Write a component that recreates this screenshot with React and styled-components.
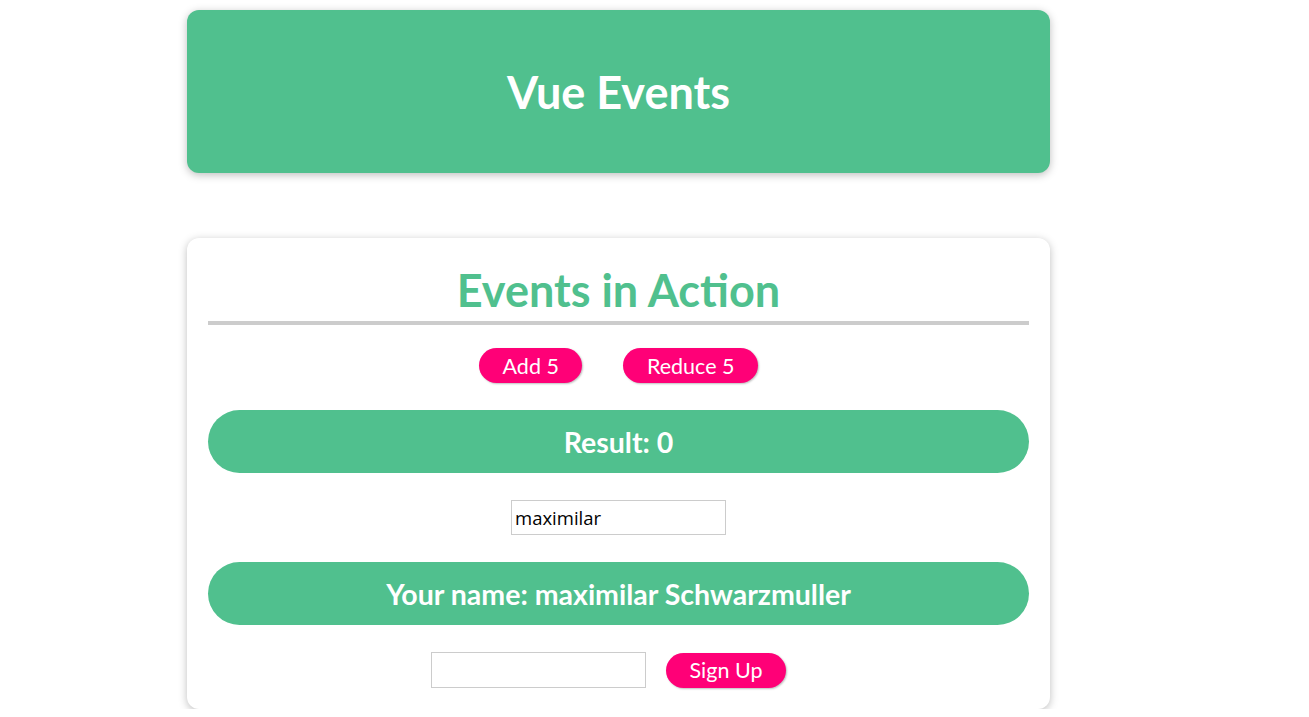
import { useState } from "react";
import styled, { createGlobalStyle } from "styled-components";

const GlobalStyle = createGlobalStyle`
  * {
    box-sizing: border-box;
  }

  html {
    font-family: "Lato", "Noto Sans", sans-serif;
  }

  body {
    margin: 0;
    background: #ffffff;
  }
`;

const green = "#50c08e";
const pink = "#ff0077";

const Page = styled.div`
  padding: 10px 0 0 187px;
`;

const Header = styled.header`
  width: 863px;
  height: 163px;
  display: flex;
  align-items: center;
  justify-content: center;
  background: ${green};
  border-radius: 12px;
  box-shadow: 0 2px 8px rgba(0, 0, 0, 0.26);

  h1 {
    margin: 0;
    color: #ffffff;
    font-size: 45px;
    font-weight: 700;
  }
`;

const Card = styled.section`
  width: 863px;
  margin-top: 65px;
  padding: 26px 21px 21px;
  display: flex;
  flex-direction: column;
  align-items: stretch;
  background: #ffffff;
  border-radius: 12px;
  box-shadow: 0 2px 8px rgba(0, 0, 0, 0.26);
`;

const Title = styled.h2`
  margin: 0;
  height: 53px;
  line-height: 53px;
  text-align: center;
  color: ${green};
  font-size: 45px;
  font-weight: 700;
  border-bottom: 4px solid #cccccc;
  box-sizing: content-box;
  padding-bottom: 4px;
`;

const Row = styled.div`
  display: flex;
  justify-content: center;
  align-items: center;
  margin-top: ${(p) => p.$top || 27}px;
`;

const Button = styled.button`
  height: 35px;
  margin: 0 20.5px;
  padding: 0 23.5px;
  border: none;
  border-radius: 30px;
  background: ${pink};
  color: #ffffff;
  font-family: "Lato", "Noto Sans", sans-serif;
  font-size: 21.5px;
  font-weight: 400;
  box-shadow: 1px 1px 2px rgba(0, 0, 0, 0.26);
  cursor: pointer;
`;

const Bar = styled.div`
  height: 63px;
  margin-top: 27px;
  display: flex;
  align-items: center;
  justify-content: center;
  background: ${green};
  border-radius: 32px;
  color: #ffffff;
  font-size: 28.5px;
  font-weight: 700;
`;

const Field = styled.input`
  width: 215px;
  height: ${(p) => p.$h || 35}px;
  padding: 0 3px;
  border: 1px solid #cccccc;
  font-family: "Open Sans", "Noto Sans", sans-serif;
  font-size: 18.5px;
  color: #000000;
  outline: none;
`;

export default function App() {
  const [counter, setCounter] = useState(0);
  const [name, setName] = useState("maximilar");
  const [email, setEmail] = useState("");

  return (
    <>
      <GlobalStyle />
      <Page>
        <Header>
          <h1>Vue Events</h1>
        </Header>
        <Card>
          <Title>Events in Action</Title>
          <Row $top={23}>
            <Button onClick={() => setCounter(counter + 5)}>Add 5</Button>
            <Button onClick={() => setCounter(counter - 5)}>Reduce 5</Button>
          </Row>
          <Bar>Result: {counter}</Bar>
          <Row>
            <Field
              type="text"
              value={name}
              onChange={(e) => setName(e.target.value)}
            />
          </Row>
          <Bar>Your name: {name} Schwarzmuller</Bar>
          <Row>
            <Field
              type="text"
              $h={36}
              value={email}
              onChange={(e) => setEmail(e.target.value)}
            />
            <Button>Sign Up</Button>
          </Row>
        </Card>
      </Page>
    </>
  );
}
